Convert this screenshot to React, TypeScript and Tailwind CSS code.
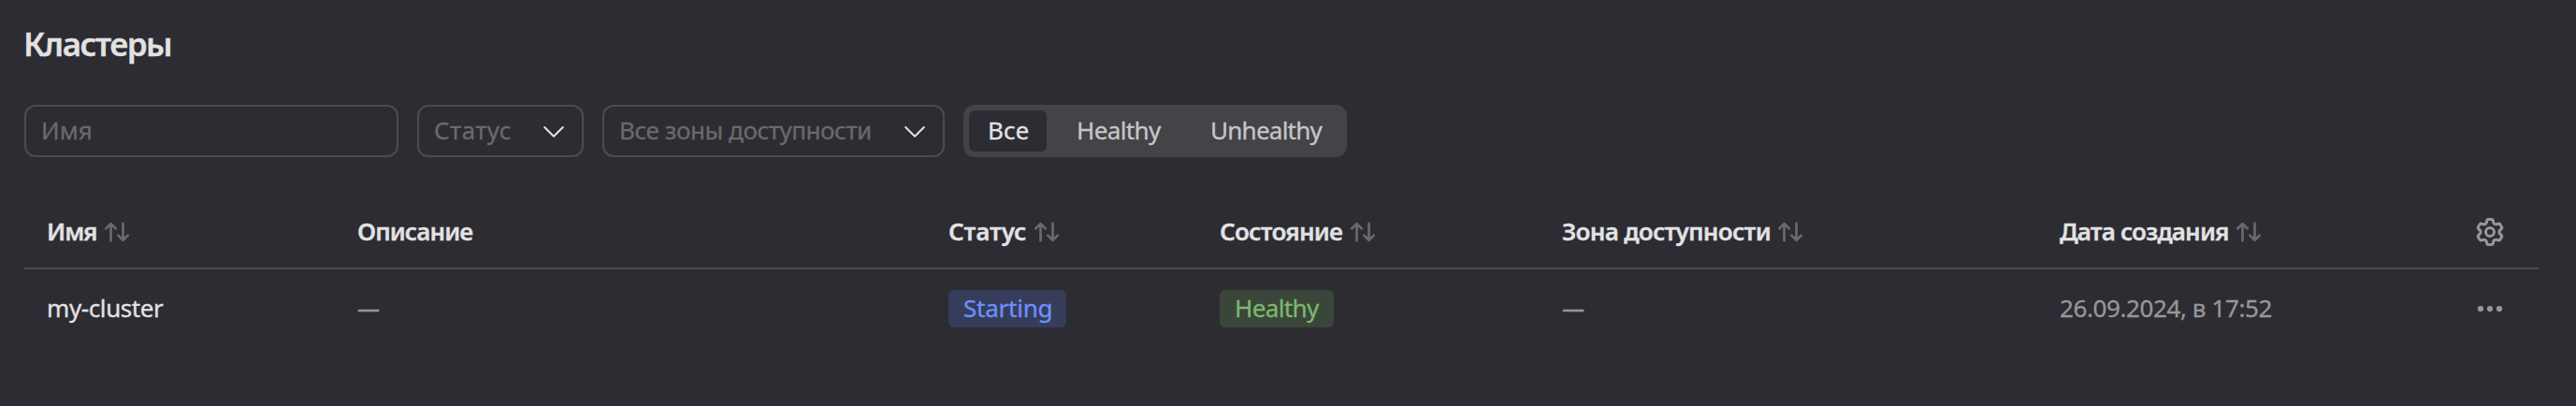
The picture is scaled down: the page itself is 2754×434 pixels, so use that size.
import type { ReactNode } from 'react';

const columns = 'grid grid-cols-[332px_632px_290px_366px_532px_1fr_68px] items-center';

function Chevron() {
  return (
    <svg className="mt-0.5 h-[14px] w-[24px] shrink-0" viewBox="0 0 24 14" fill="none" stroke="#e2e2e3" strokeWidth="2" strokeLinecap="round" strokeLinejoin="round">
      <path d="M2.2 2L12 11.8L21.8 2" />
    </svg>
  );
}

function SortIcon() {
  return (
    <svg className="mt-0.5 h-[22px] w-[28px] shrink-0" viewBox="0 0 28 22" fill="none" stroke="#6a696e" strokeWidth="2.7" strokeLinecap="round" strokeLinejoin="round">
      <path d="M2.3 7.3L7.5 2.1L12.7 7.3M7.5 2.1V20.2M15.3 14.6L20.5 19.8L25.7 14.6M20.5 19.8V1.8" />
    </svg>
  );
}

function GearIcon() {
  const tooth = 'M-1.8 -5.35C-1.7 -6.2 -1.6 -6.75 -0.9 -6.75H0.9C1.6 -6.75 1.7 -6.2 1.8 -5.35C1.95 -4.3 2.9 -3.85 3.73 -4.23';
  return (
    <svg className="h-8 w-8" viewBox="-8 -8 16 16" fill="none" stroke="#97979a" strokeWidth="1.5" strokeLinecap="round" strokeLinejoin="round">
      <circle r="2.25" />
      {[0, 60, 120, 180, 240, 300].map((a) => (
        <path key={a} d={tooth} transform={`rotate(${a})`} />
      ))}
    </svg>
  );
}

function Header({ children, className }: { children: string; className: string }) {
  return (
    <div className="flex items-center">
      <span className={`font-semibold whitespace-nowrap ${className}`}>{children}</span>
      {children !== 'Описание' && <SortIcon />}
    </div>
  );
}

function Badge({ children, className }: { children: ReactNode; className: string }) {
  return <span className={`flex h-10 items-center rounded-[6px] pb-0.5 pl-4 ${className}`}>{children}</span>;
}

export default function App() {
  return (
    <main className="h-[434px] w-[2754px] bg-[#2d2c33] pl-[26px] font-['Noto_Sans',sans-serif] text-[26px] leading-9 text-[#e2e2e3] [-webkit-text-stroke:0.3px]">
      <h1 className="-ml-px h-[112px] pt-[23px] text-[35px] leading-[48px] font-semibold tracking-[-1.5px]">Кластеры</h1>

      <div className="flex h-14 gap-5">
        <div className="flex w-[400px] items-center rounded-[12px] border-2 border-[#4c4b51] pb-0.5 pl-4 tracking-[0.1px] text-[#6a696e]">Имя</div>
        <div className="flex w-[178px] items-center justify-between rounded-[12px] border-2 border-[#4c4b51] pr-[18px] pl-4 text-[#6a696e]">
          <span className="pb-0.5 tracking-[0.45px]">Статус</span>
          <Chevron />
        </div>
        <div className="flex w-[366px] items-center justify-between rounded-[12px] border-2 border-[#4c4b51] pr-[18px] pl-4 text-[#6a696e]">
          <span className="pb-0.5 tracking-[-0.45px] whitespace-nowrap">Все зоны доступности</span>
          <Chevron />
        </div>
        <div className="flex w-[410px] rounded-[12px] bg-[#444348] p-1.5 text-[#c6c6c8]">
          <button className="flex w-[83px] items-center rounded-[6px] bg-[#2d2c33] pb-0.5 pl-5 tracking-[0.2px] text-[#e2e2e3]">Все</button>
          <button className="flex w-[142px] items-center pb-0.5 pl-8 tracking-[-0.6px]">Healthy</button>
          <button className="flex items-center pb-0.5 pl-[33px] tracking-[-0.75px]">Unhealthy</button>
        </div>
      </div>

      <section className="mt-[42px] w-[2688px]">
        <div className={`${columns} h-[78px] border-b-2 border-[#4c4b51] pb-0.5 pl-6`}>
          <Header className="w-[61px] tracking-[-1.1px]">Имя</Header>
          <Header className="tracking-[-0.9px]">Описание</Header>
          <Header className="w-[91px] tracking-[-0.1px]">Статус</Header>
          <Header className="w-[139px] tracking-[-0.75px]">Состояние</Header>
          <Header className="w-[230px] tracking-[-0.7px]">Зона доступности</Header>
          <Header className="w-[188px] tracking-[-0.85px]">Дата создания</Header>
          <button className="col-start-7 mt-0.5"><GearIcon /></button>
        </div>
        <div className={`${columns} h-[84px] pl-6`}>
          <span className="pb-0.5 tracking-[-0.4px]">my-cluster</span>
          <span className="pb-0.5 text-2xl leading-9 font-medium text-[#97979a]">—</span>
          <Badge className="w-[126px] bg-[#363d5a] tracking-[-0.22px] text-[#6e8ffc]">Starting</Badge>
          <Badge className="w-[122px] bg-[#3a4639] tracking-[-0.6px] text-[#7ab96d]">Healthy</Badge>
          <span className="pb-0.5 text-2xl leading-9 font-medium text-[#97979a]">—</span>
          <span className="pb-0.5 tracking-[-0.4px] text-[#97979a]">26.09.2024, в 17:52</span>
          <svg className="h-8 w-8" viewBox="0 0 32 32" fill="#97979a">
            <circle cx="6" cy="16" r="3.1" />
            <circle cx="16" cy="16" r="3.1" />
            <circle cx="26" cy="16" r="3.1" />
          </svg>
        </div>
      </section>
    </main>
  );
}
